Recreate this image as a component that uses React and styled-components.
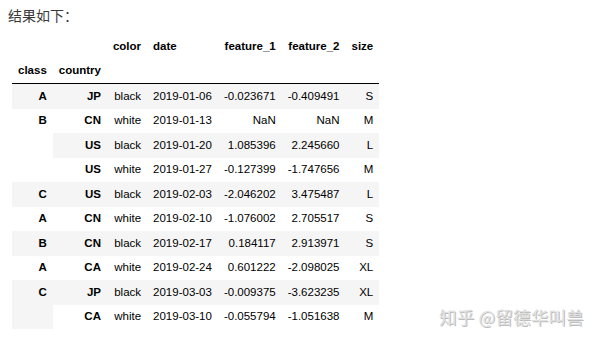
import React from "react"
import styled, { createGlobalStyle } from "styled-components"

const GlobalStyle = createGlobalStyle`
  html, body {
    margin: 0;
    padding: 0;
    background: #fff;
  }
  body {
    font-family: "Liberation Sans", Arial, sans-serif;
  }
`

const Page = styled.div`
  position: relative;
  width: 600px;
  height: 343px;
  overflow: hidden;
  background: #fff;
`

const Intro = styled.p`
  margin: 0;
  padding: 5px 0 0 8px;
  height: 29px;
  box-sizing: border-box;
  font-family: "Noto Sans CJK SC", "Liberation Sans", sans-serif;
  font-size: 14px;
  line-height: 20px;
  color: #3a3a3a;
`

const Table = styled.table`
  margin-left: 12px;
  margin-top: 5px;
  border-collapse: collapse;
  border-spacing: 0;
  font-family: "Liberation Sans", Arial, sans-serif;
  font-size: 11.5px;
  color: #000;

  th,
  td {
    padding: 5.75px 6px;
    line-height: 13px;
    text-align: right;
    vertical-align: middle;
    white-space: nowrap;
    border: none;
  }
`

const Head = styled.thead`
  border-bottom: 1px solid #000;

  th {
    font-weight: bold;
    vertical-align: bottom;
  }
`

const HeadCell = styled.th`
  text-align: ${({ $align }) => $align || "right"} !important;
`

const Row = styled.tr`
  background: ${({ $striped }) => ($striped ? "#f5f5f5" : "#fff")};
`

const IndexCell = styled.th`
  font-weight: bold;
  vertical-align: top !important;
`

const Watermark = styled.div`
  position: absolute;
  left: 439px;
  top: 305px;
  font-family: "Noto Sans CJK SC", sans-serif;
  font-size: 17.5px;
  line-height: 24px;
  color: #e0e0e0;
  text-shadow: 1px 1px 0 #bdbdbd;
  letter-spacing: 0.2px;
  white-space: nowrap;
`

const rows = [
  { cls: "A", span: 1, country: "JP", color: "black", date: "2019-01-06", f1: "-0.023671", f2: "-0.409491", size: "S" },
  { cls: "B", span: 3, country: "CN", color: "white", date: "2019-01-13", f1: "NaN", f2: "NaN", size: "M" },
  { country: "US", color: "black", date: "2019-01-20", f1: "1.085396", f2: "2.245660", size: "L" },
  { country: "US", color: "white", date: "2019-01-27", f1: "-0.127399", f2: "-1.747656", size: "M" },
  { cls: "C", span: 1, country: "US", color: "black", date: "2019-02-03", f1: "-2.046202", f2: "3.475487", size: "L" },
  { cls: "A", span: 1, country: "CN", color: "white", date: "2019-02-10", f1: "-1.076002", f2: "2.705517", size: "S" },
  { cls: "B", span: 1, country: "CN", color: "black", date: "2019-02-17", f1: "0.184117", f2: "2.913971", size: "S" },
  { cls: "A", span: 1, country: "CA", color: "white", date: "2019-02-24", f1: "0.601222", f2: "-2.098025", size: "XL" },
  { cls: "C", span: 2, country: "JP", color: "black", date: "2019-03-03", f1: "-0.009375", f2: "-3.623235", size: "XL" },
  { country: "CA", color: "white", date: "2019-03-10", f1: "-0.055794", f2: "-1.051638", size: "M" },
]

const App = () => (
  <Page>
    <GlobalStyle />
    <Intro>结果如下：</Intro>
    <Table>
      <Head>
        <tr>
          <th />
          <th />
          <HeadCell $align="left">color</HeadCell>
          <HeadCell $align="left">date</HeadCell>
          <HeadCell>feature_1</HeadCell>
          <HeadCell>feature_2</HeadCell>
          <HeadCell>size</HeadCell>
        </tr>
        <tr>
          <HeadCell $align="left">class</HeadCell>
          <HeadCell $align="left">country</HeadCell>
          <th />
          <th />
          <th />
          <th />
          <th />
        </tr>
      </Head>
      <tbody>
        {rows.map((r, i) => (
          <Row key={i} $striped={i % 2 === 0}>
            {r.cls && <IndexCell rowSpan={r.span}>{r.cls}</IndexCell>}
            <IndexCell>{r.country}</IndexCell>
            <td>{r.color}</td>
            <td>{r.date}</td>
            <td>{r.f1}</td>
            <td>{r.f2}</td>
            <td>{r.size}</td>
          </Row>
        ))}
      </tbody>
    </Table>
    <Watermark>知乎 @留德华叫兽</Watermark>
  </Page>
)

export default App
